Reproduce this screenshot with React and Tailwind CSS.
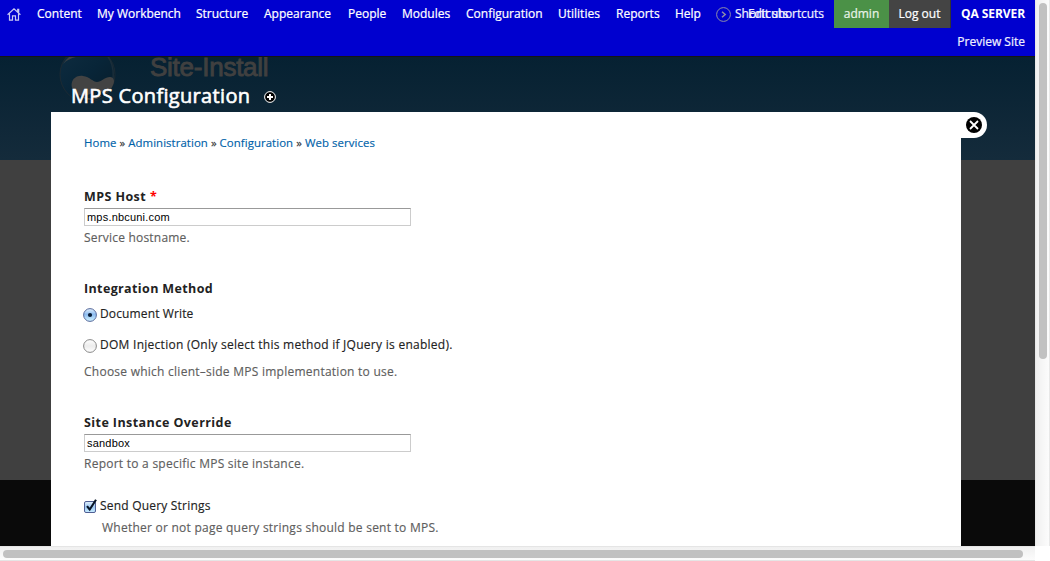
const menu = [
  ['Content', 'w-[60px]'],
  ['My Workbench', 'w-[99px]'],
  ['Structure', 'w-[68px]'],
  ['Appearance', 'w-[84px]'],
  ['People', 'w-[54px]'],
  ['Modules', 'w-[64px]'],
  ['Configuration', 'w-[92px]'],
  ['Utilities', 'w-[58px]'],
  ['Reports', 'w-[59px]'],
  ['Help', 'w-[41px]'],
];

function HomeIcon() {
  return (
    <svg width="14" height="13" viewBox="0 0 14 13" fill="none" stroke="#c9c9f2" strokeWidth="1.2">
      <path d="M.6 6.7 7 .9l6.4 5.8M2.5 5.8v6.3h3V7.9h3v4.2h3V5.8M10.7 3.6V1.4h1v3" />
    </svg>
  );
}

function Toolbar() {
  return (
    <header className="flex h-[57px] shrink-0 items-start border-b border-[#151515] bg-[#0000cf] text-[12px] leading-[28px] font-medium whitespace-nowrap text-white [-webkit-text-stroke:0.22px]">
      <div className="h-[28px] w-[37px] pt-[8px] pl-[7px]"><HomeIcon /></div>
      <nav className="flex">
        {menu.map(([label, width]) => (
          <a key={label} className={width}>{label}</a>
        ))}
      </nav>
      <div className="flex h-[28px] w-[118px] items-center">
        <svg width="15" height="15" viewBox="0 0 15 15" fill="none" stroke="#8e8ea8" className="mt-[1px] mr-[4px] shrink-0">
          <circle cx="7.5" cy="7.5" r="6.9" />
          <path d="m6 4.7 3.2 2.8L6 10.3" strokeWidth="1.5" />
        </svg>
        <span className="relative text-[#f0f0ff]">
          Shortcuts
          <span className="absolute top-0 left-[13px] tracking-[-0.08px]">Edit shortcuts</span>
        </span>
      </div>
      <a className="h-[28px] w-[55px] bg-[#4b9147] text-center text-[#e9f4e8]">admin</a>
      <a className="h-[28px] w-[62px] border-r border-[#333] bg-[#444] text-center">Log out</a>
      <div className="flex flex-1 flex-col items-end pr-[10px]">
        <span className="font-bold tracking-[-0.08px] [-webkit-text-stroke:0px]">QA SERVER</span>
        <span className="text-[#f0f0ff]">Preview Site</span>
      </div>
    </header>
  );
}

function Backdrop() {
  return (
    <div className="col-start-1 row-start-1 flex h-[489px] flex-col">
      <div className="flex h-[103px] bg-linear-to-b from-[#062132] to-[#142b3b] pl-[59px]">
        <svg width="58" height="47" viewBox="0 1 58 47" className="shrink-0">
          <defs>
            <linearGradient id="drop" x1="0" y1="0" x2="1" y2="1">
              <stop offset="0" stopColor="#0e2c40" />
              <stop offset=".5" stopColor="#082538" />
              <stop offset="1" stopColor="#081c29" />
            </linearGradient>
          </defs>
          <circle cx="28.5" cy="18.5" r="27.5" fill="url(#drop)" stroke="#1c2a33" />
          <path d="M4 8C9 0 15-3 22-3l-5 4C12 2 8 4 4 8Z" fill="#3b4043" />
          <path d="M47-2c6 7 8 15 7 25" fill="none" stroke="#1b2e3a" strokeWidth="1.5" />
          <path d="M13 32c-2-8 4-13 11-12 7 1 10 6 14 6 4 0 8-5 13-5 4 0 5 4 3 8-3 7-7 9-10 8-4-2-6-4-10-1-7 6-19 5-21-4Z" fill="#434343" />
          <path d="M24 41c5 3 13 3 18-1" fill="none" stroke="#434343" strokeWidth="1.5" />
        </svg>
        <h2 className="mt-[-6px] ml-[33px] h-[32px] font-['Liberation_Sans',sans-serif] text-[26px] leading-[32px] font-medium tracking-[-0.25px] whitespace-nowrap text-[#404040] [-webkit-text-stroke:0.9px_#404040]">Site-Install</h2>
      </div>
      <div className="h-[320px] bg-[#404040]" />
      <div className="flex-1 bg-[#0a0a0a]" />
    </div>
  );
}

function Field({ label, required, value, help, tracking }) {
  return (
    <div className="flex flex-col">
      <label className="text-[12.5px] leading-[18px] font-bold tracking-[0.42px] [-webkit-text-stroke:0px]">
        {label}{required && <span className="ml-[4px] text-[#f00]">*</span>}
      </label>
      <input
        defaultValue={value}
        className="mt-[2px] h-[18px] w-[327px] border border-[#ccc] border-t-[#999] px-[2px] font-['Liberation_Sans',sans-serif] text-[11px] tracking-[0.2px] text-black outline-none [-webkit-text-stroke:0px]"
      />
      <p className={`mt-[3px] text-[12px] leading-[18px] text-[#5e5e5e] ${tracking}`}>{help}</p>
    </div>
  );
}

function Radio({ checked, children }) {
  return (
    <label className="flex h-[18px] items-center">
      <svg width="14" height="14" viewBox="0 0 14 14" className="mt-[1px] mr-[3px] ml-[-1px] shrink-0">
        <defs>
          <linearGradient id="on" x2="0" y2="1">
            <stop stopColor="#e4f1fc" /><stop offset=".45" stopColor="#8dbcf0" /><stop offset="1" stopColor="#d2f4ff" />
          </linearGradient>
          <linearGradient id="off" x2="0" y2="1">
            <stop stopColor="#fff" /><stop offset=".5" stopColor="#ececec" /><stop offset="1" stopColor="#fff" />
          </linearGradient>
        </defs>
        <circle cx="7" cy="7" r="6.4" fill={checked ? 'url(#on)' : 'url(#off)'} stroke={checked ? '#596a9b' : '#888'} />
        {checked && <circle cx="7" cy="7" r="2.1" fill="#071b35" />}
      </svg>
      {children}
    </label>
  );
}

function Checkbox({ children }) {
  return (
    <label className="flex h-[18px] items-center">
      <svg width="13" height="15" viewBox="0 0 13 15" className="mt-[1px] mr-[3px] shrink-0">
        <defs>
          <linearGradient id="box" x2="0" y2="1">
            <stop stopColor="#e4f1fc" /><stop offset=".5" stopColor="#9cc8f3" /><stop offset="1" stopColor="#c9edff" />
          </linearGradient>
        </defs>
        <rect x=".5" y="2.5" width="11" height="11" rx="1.5" fill="url(#box)" stroke="#505f94" />
        <path d="m3 7.2 2.7 3.3L12 .7" fill="none" stroke="#071426" strokeWidth="2.1" />
      </svg>
      {children}
    </label>
  );
}

function Dialog() {
  return (
    <div className="z-10 col-start-1 row-start-1 ml-[51px] flex flex-col">
      <div className="flex h-[55px] items-start pt-[25px] pl-[20px] text-white">
        <h1 className="w-[193px] text-[20px] leading-[28px] font-medium tracking-[0.33px] whitespace-nowrap [-webkit-text-stroke:0.6px]">MPS Configuration</h1>
        <svg width="12" height="12" viewBox="0 0 12 12" className="mt-[9px]">
          <circle cx="6" cy="6" r="5.4" fill="#000" stroke="#fff" />
          <path d="M6 3v6M3 6h6" stroke="#fff" strokeWidth="2" />
        </svg>
      </div>
      <div className="flex items-start">
        <main className="h-[434px] w-[910px] bg-white pt-[22px] pl-[33px] text-[12px] text-[#333] [-webkit-text-stroke:0.15px]">
          <p className="flex gap-[3px] text-[11.4px] leading-[18px] tracking-[0.07px] whitespace-nowrap text-[#0062a9]">
            <a>Home</a><span className="text-[#333]">»</span>
            <a>Administration</a><span className="text-[#333]">»</span>
            <a>Configuration</a><span className="text-[#333]">»</span>
            <a>Web services</a>
          </p>
          <form className="mt-[36px] flex flex-col text-[#222]">
            <Field label="MPS Host" required value="mps.nbcuni.com" help="Service hostname." tracking="tracking-[0.2px]" />
            <div className="mt-[33px] flex flex-col">
              <span className="text-[12.5px] leading-[18px] font-bold tracking-[0.37px] [-webkit-text-stroke:0px]">Integration Method</span>
              <div className="mt-[7px] flex flex-col gap-[13px]">
                <Radio checked><span className="tracking-[0.13px]">Document Write</span></Radio>
                <Radio><span className="tracking-[0.27px]">DOM Injection (Only select this method if JQuery is enabled).</span></Radio>
              </div>
              <p className="mt-[9px] leading-[18px] tracking-[0.25px] text-[#5e5e5e]">Choose which client–side MPS implementation to use.</p>
            </div>
            <div className="mt-[33px]">
              <Field label="Site Instance Override" value="sandbox" help="Report to a specific MPS site instance." tracking="tracking-[0.25px]" />
            </div>
            <div className="mt-[24px]">
              <Checkbox><span className="tracking-[0.2px]">Send Query Strings</span></Checkbox>
              <p className="mt-[4px] ml-[18px] leading-[18px] tracking-[0.24px] text-[#5e5e5e]">Whether or not page query strings should be sent to MPS.</p>
            </div>
          </form>
        </main>
        <button className="flex h-[26px] w-[26px] items-center rounded-r-full bg-white pl-[5px]">
          <svg width="16" height="16" viewBox="0 0 16 16">
            <circle cx="8" cy="8" r="8" fill="#000" />
            <path d="m4 4 8 8m0-8-8 8" stroke="#fff" strokeWidth="1.8" />
          </svg>
        </button>
      </div>
    </div>
  );
}

export default function App() {
  return (
    <div className="grid h-[561px] w-[1050px] grid-cols-[1035px_15px] grid-rows-[546px_15px] overflow-hidden bg-white font-['Open_Sans','Noto_Sans',sans-serif]">
      <div className="flex flex-col overflow-hidden">
        <Toolbar />
        <div className="grid h-[489px] grid-cols-[1035px] grid-rows-[489px] overflow-hidden">
          <Backdrop />
          <Dialog />
        </div>
      </div>
      <div className="border-x border-[#e8e8e8] bg-linear-to-r from-[#f0f0f0] to-[#fcfcfc] pt-[3px] pl-[3px]">
        <div className="h-[356px] w-[8px] rounded-full bg-[#c1c1c1]" />
      </div>
      <div className="border-y border-[#e5e5e5] bg-linear-to-b from-[#f0f0f0] to-[#fcfcfc] pt-[3px] pl-[3px]">
        <div className="h-[8px] w-[1020px] rounded-full bg-[#c1c1c1]" />
      </div>
      <div className="bg-white" />
    </div>
  );
}
